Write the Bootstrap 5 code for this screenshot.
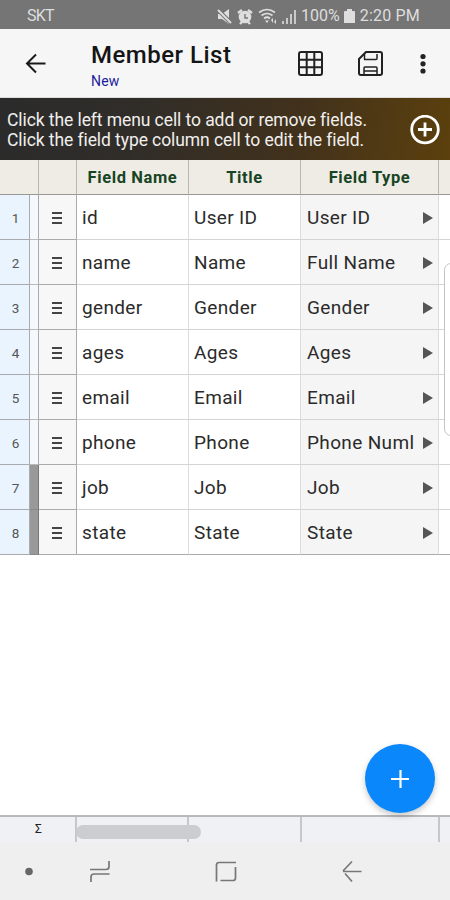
<!DOCTYPE html>
<html lang="en">
<head>
<meta charset="utf-8">
<meta name="viewport" content="width=device-width, initial-scale=1">
<title>Member List</title>
<link href="https://cdn.jsdelivr.net/npm/bootstrap@5.3.0/dist/css/bootstrap.min.css" rel="stylesheet">
<style>
body{font-family:Roboto,"Liberation Sans",sans-serif;color:#2b2b2b;background:#fff;overflow:hidden}
.screen{width:450px;height:900px}
.status{height:29px;background:#757575;color:#dedede;font-size:16px;padding:2px 30px 0 27px}
.status .carrier{letter-spacing:-.8px}
.status .pct{margin-left:-4px;letter-spacing:0}
.status .clock{margin-left:5px;letter-spacing:.2px}
.appbar{height:69px;background:#f6f6f6;padding-left:24px;border-bottom:1px solid #ddd}
.titles{margin-left:43px;width:205px;padding-top:12px}
.titles h1{font-size:24px;line-height:29px;letter-spacing:.5px;color:#151515}
.titles div{font-size:14px;line-height:17px;color:#1c1c9c;margin-top:3px;letter-spacing:.2px}
.hint{height:62px;background:linear-gradient(100deg,#2b2b2b 0%,#302d29 30%,#41311c 65%,#5c400d 100%);color:#f0efed;padding:2px 10px 0 7px;font-size:17.500px;line-height:20px;letter-spacing:-.08px}
.sheet-row{display:grid;grid-template-columns:30px 9px 38px 112px 112px 138px 11px;height:45px;font-size:19px;letter-spacing:.35px}
.sheet-row>div{border-right:1px solid #dcdcdc;border-bottom:1px solid #d4d4d4;display:flex;align-items:center;white-space:nowrap;overflow:hidden;padding:3px 0 0 5px}
.sheet-row>div:last-child{border-right:0}
.sheet-row>.num{background:#eaf4fe;border-color:#a8abaf;font-size:13.500px;color:#555;letter-spacing:0;justify-content:center;padding-left:2px}
.sheet-row>.gut{background:#f5f9fe;border-color:#aaa;border-bottom-color:#bbb}
.sheet-row>.gut.on{background:#999;border-color:#777;border-bottom-color:#888}
.sheet-row>.grip{background:#f7f7f7;border-color:#aaa;justify-content:center;padding:2px 0 0}
.sheet-row>.kind{background:#f5f5f5;justify-content:space-between;padding-left:6px;padding-right:4px}
.kind span{max-width:109px;overflow:hidden}
.kind svg{margin-top:-1px}
.sheet-row.end>div{border-bottom-color:#aaa}
.sheet-row.heads{height:35px;grid-template-columns:39px 38px 112px 112px 138px 11px;font-size:16.500px;letter-spacing:.6px;font-weight:700;color:#174424}
.sheet-row.heads>div{background:#eeece5;border-right-color:#b8b7b2;border-bottom:1px solid #999892;justify-content:center;padding:3px 0 0}
.thumb{position:absolute;right:-8px;top:103px;width:14px;height:173px;border:1px solid #c4c4c4;border-radius:8px;background:#fff}
.sum{height:28px;display:grid;grid-template-columns:77px 112px 113px 138px 10px;background:linear-gradient(#eff1f4 25px,#efefef 25px);border-top:2px solid #b9b9b9;position:relative}
.sum>.cell{border-right:2px solid #c6c7ca;height:25px}
.sum .sigma{font-size:12px;line-height:24px;color:#222;text-align:center;padding-left:2px}
.hbar{position:absolute;left:76px;top:8px;width:125px;height:14px;border-radius:7px;background:#cbcdcf}
.sys{height:57px;background:#efefef}
.fab{position:absolute;left:365px;top:744px;width:70px;height:69px;border-radius:50%;background:#0a87fb;box-shadow:0 3px 6px rgba(0,0,0,.22)}
svg{display:block;flex:none}
</style>
<script src="https://cdn.jsdelivr.net/npm/bootstrap@5.3.0/dist/js/bootstrap.bundle.min.js"></script>
</head>
<body>
<main class="screen position-relative d-flex flex-column overflow-hidden">
<header class="status d-flex align-items-center">
 <span class="carrier me-auto">SKT</span>
 <svg width="88" height="20" viewBox="216 4 88 20" fill="#dedede">
  <path d="M217 12h4l7-5v15l-7-5h-4z"/><path d="M217 8l13 13" stroke="#757575" stroke-width="4"/><path d="M217 8l13 13" stroke="#dedede" stroke-width="2"/>
  <circle cx="244" cy="15" r="6.300"/><path d="M237 11l4-3M251 11l-4-3M239 22l2-2M249 22l-2-2" stroke="#dedede" stroke-width="2.400"/><path d="M244 12v4h3" fill="none" stroke="#757575" stroke-width="1.400"/>
  <path d="M258 10.500q8-6 16 0M260.500 13.500q5.500-4 11 0M263 16.500q3-2.500 6 0" fill="none" stroke="#dedede" stroke-width="1.700"/><path d="M264 18.500h4l-2 2.500zM270 18l2-2v5zM275 17v5l-2-2z"/>
  <path d="M281 19h2v3h-2zM285 16h2v6h-2zM289 12h2v10h-2zM293 8h2v14h-2z" opacity=".8"/>
 </svg>
 <span class="pct">100%</span>
 <svg class="ms-1" width="11" height="16" viewBox="0 0 11 16" fill="#dedede"><path d="M3 1h5v2h2q1 0 1 1v11H0V4q0-1 1-1h2z"/></svg>
 <span class="clock">2:20 PM</span>
</header>
<nav class="appbar d-flex align-items-start">
 <svg class="mt-4" width="24" height="22" viewBox="24 53 24 22" fill="none" stroke="#1a1a1a" stroke-width="2"><path d="M45.500 63.500H27M36 54.500l-9 9 9 9"/></svg>
 <div class="titles"><h1 class="m-0 fw-medium">Member List</h1><div>New</div></div>
 <svg width="154" height="68" viewBox="296 29 154 68" fill="none" stroke="#222" stroke-width="2">
  <rect x="299" y="52" width="23" height="23" rx="2"/><path d="M306.700 52v23M314.300 52v23M299 59.700h23M299 67.300h23"/>
  <path d="M366 52h14q2 0 2 2v19q0 2-2 2h-19q-2 0-2-2V59z"/><path d="M364 59.500h12q1 0 1-1V54M364.500 54v5.500M364 74v-6q0-1 1-1h11q1 0 1 1v6M364 71h13" stroke-width="1.500"/>
  <g fill="#222" stroke="none"><circle cx="423" cy="56.500" r="2.600"/><circle cx="423" cy="63.800" r="2.600"/><circle cx="423" cy="71" r="2.600"/></g>
 </svg>
</nav>
<section class="hint d-flex align-items-center justify-content-between">
 <div class="text-nowrap"><div>Click the left menu cell to add or remove fields.</div><div>Click the field type column cell to edit the field.</div></div>
 <svg width="30" height="30" viewBox="0 1 30 30" fill="none" stroke="#fff" stroke-width="2.800"><circle cx="15" cy="15.500" r="13.300"/><path d="M15 8.500v14M8 15.500h14"/></svg>
</section>
<section class="sheet position-relative">
 <div class="sheet-row heads"><div></div><div></div><div>Field Name</div><div>Title</div><div>Field Type</div><div></div></div>
 <div id="rows"></div>
 <div class="thumb"></div>
</section>
<div class="flex-grow-1"></div>
<footer class="sum"><div class="cell sigma">Σ</div><div class="cell"></div><div class="cell"></div><div class="cell"></div><div></div><span class="hbar"></span></footer>
<nav class="sys">
 <svg width="450" height="57" viewBox="0 843 450 57" fill="none" stroke="#777" stroke-width="1.700">
  <circle cx="29" cy="871.500" r="3.800" fill="#666" stroke="none"/>
  <path d="M90 869.500h16q3 0 3-3V861M91 882v-5q0-3 3-3h15.500"/>
  <path d="M236 862.500h-17q-2.500 0-2.500 2.500v16.500M220.500 880.500h12.500q2.500 0 2.500-2.500v-11"/>
  <path d="M361.500 871.500H343M352 861.500l-9 9.500M345 873.500l7 8"/>
 </svg>
</nav>
<button class="fab btn p-0 border-0 d-flex align-items-center justify-content-center" aria-label="Add"><svg width="20" height="20" viewBox="0 0 20 20" stroke="#fff" stroke-width="2.200"><path d="M10.500 1v18M1 10h18"/></svg></button>
</main>
<script>
const fields=[['id','User ID','User ID'],['name','Name','Full Name'],['gender','Gender','Gender'],['ages','Ages','Ages'],['email','Email','Email'],['phone','Phone','Phone Numl'],['job','Job','Job'],['state','State','State']];
document.getElementById('rows').innerHTML=fields.map((f,i)=>`<div class="sheet-row${i==7?' end':''}"><div class="num">${i+1}</div><div class="gut${i>5?' on':''}"></div><div class="grip"><svg width="11" height="14" viewBox="0 0 11 14" stroke="#444" stroke-width="2"><path d="M0 2h10M0 7h10M0 12h10"/></svg></div><div>${f[0]}</div><div>${f[1]}</div><div class="kind"><span>${f[2]}</span><svg width="12" height="12" viewBox="0 0 12 12" fill="#555"><path d="M1 0l10 6-10 6z"/></svg></div><div></div></div>`).join('');
</script>
</body>
</html>
